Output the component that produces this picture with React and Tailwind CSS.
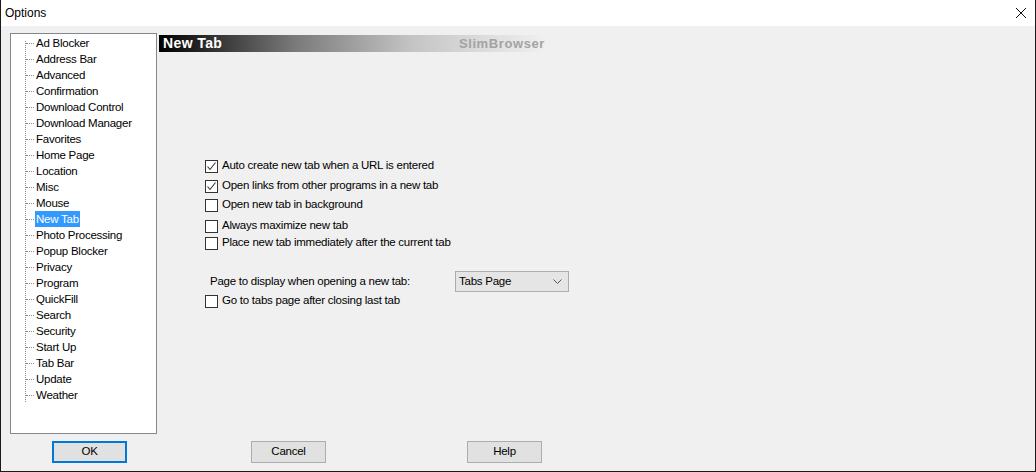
import React from 'react';

const items = [
  'Ad Blocker', 'Address Bar', 'Advanced', 'Confirmation', 'Download Control',
  'Download Manager', 'Favorites', 'Home Page', 'Location', 'Misc', 'Mouse',
  'New Tab', 'Photo Processing', 'Popup Blocker', 'Privacy', 'Program',
  'QuickFill', 'Search', 'Security', 'Start Up', 'Tab Bar', 'Update', 'Weather',
];

const Check = ({ checked, label, className = '' }) => (
  <div className={`flex items-center h-[16px] ${className}`}>
    <div className="w-[13px] h-[13px] border border-[#333] bg-white flex items-center justify-center shrink-0">
      {checked && (
        <svg width="11" height="11" viewBox="0 0 11 11">
          <polyline points="1.5,5.5 4,8.5 9.5,1.5" fill="none" stroke="#333" strokeWidth="1.1" />
        </svg>
      )}
    </div>
    <span className="ml-[4px]">{label}</span>
  </div>
);

const Button = ({ children, primary }) => (
  <button
    className={`w-[75px] h-[22px] bg-[#e1e1e1] text-black ${
      primary ? 'border-2 border-[#0078d7]' : 'border border-[#adadad]'
    }`}
  >
    {children}
  </button>
);

export default function App() {
  return (
    <div
      className="w-[1036px] h-[472px] bg-[#f0f0f0] border-x border-b border-[#1a1a1a] flex flex-col text-[11.5px] tracking-[-0.25px] text-black overflow-hidden"
      style={{ fontFamily: '"Liberation Sans", "Segoe UI", sans-serif' }}
    >
      {/* Title bar */}
      <div className="h-[26px] bg-white flex items-center justify-between pl-[4px] pr-[8px] shrink-0">
        <span className="text-[12px] tracking-normal">Options</span>
        <svg width="12" height="12" viewBox="0 0 12 12">
          <path d="M1 1L11 11M11 1L1 11" stroke="#111" strokeWidth="1" />
        </svg>
      </div>

      <div className="flex pl-[9px] pt-[7px]">
        {/* Tree */}
        <div className="w-[147px] h-[401px] bg-white border border-[#828790] relative pt-[1px]">
          <div className="absolute left-[14px] top-[7px] h-[361px] border-l border-dotted border-[#8a8a8a]" />
          {items.map((it) => (
            <div key={it} className="flex items-center h-[16px] leading-[16px]">
              <div className="ml-[15px] w-[8px] border-t border-dotted border-[#8a8a8a]" />
              <span
                className={`ml-[1px] px-[1px] ${
                  it === 'New Tab' ? 'bg-[#3399ff] text-white' : ''
                }`}
              >
                {it}
              </span>
            </div>
          ))}
        </div>

        {/* Content */}
        <div className="flex flex-col ml-[2px] pt-[2px]">
          <div className="w-[388px] h-[17px] flex items-center justify-between pl-[4px] pr-[2px] bg-[linear-gradient(to_right,#000_0%,#7a7a7a_35%,#c4c4c4_65%,#dedede_85%,#f0f0f0_100%)]">
            <span className="text-white font-bold text-[14px] tracking-[0.4px]">New Tab</span>
            <span className="text-[#a3a3a3] font-bold text-[13px] tracking-[0.6px]">SlimBrowser</span>
          </div>

          <div className="pl-[46px] pt-[106px] flex flex-col">
            <Check checked label="Auto create new tab when a URL is entered" />
            <Check checked label="Open links from other programs in a new tab" className="mt-[4px]" />
            <Check label="Open new tab in background" className="mt-[3px]" />
            <Check label="Always maximize new tab" className="mt-[5px]" />
            <Check label="Place new tab immediately after the current tab" className="mt-[1px]" />
            <div className="flex items-center mt-[20px] h-[21px]">
              <span className="ml-[5px] w-[245px]">Page to display when opening a new tab:</span>
              <div className="w-[114px] h-[21px] bg-[#e5e5e5] border border-[#adadad] flex items-center justify-between pl-[3px] pr-[6px]">
                <span>Tabs Page</span>
                <svg width="9" height="6" viewBox="0 0 9 6">
                  <polyline points="0.5,0.5 4.5,4.5 8.5,0.5" fill="none" stroke="#555" strokeWidth="1" />
                </svg>
              </div>
            </div>
            <Check label="Go to tabs page after closing last tab" className="mt-[1px]" />
          </div>
        </div>
      </div>

      {/* Buttons */}
      <div className="flex mt-[7px] pl-[51px]">
        <Button primary>OK</Button>
        <div className="ml-[124px]"><Button>Cancel</Button></div>
        <div className="ml-[141px]"><Button>Help</Button></div>
      </div>
    </div>
  );
}
